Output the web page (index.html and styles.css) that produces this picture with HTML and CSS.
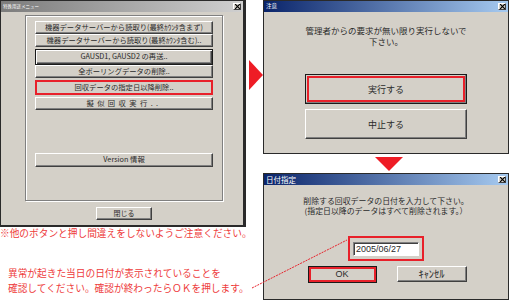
FILE: index.html
```html
<!DOCTYPE html>
<html lang="ja">
<head>
  <meta charset="UTF-8">
  <title>回収データの指定日以降削除</title>
  <link rel="stylesheet" href="styles.css">
</head>
<body>
  <div class="sheet">
    <div class="col-left">
      <div class="win win-menu">
        <div class="titlebar inactive">
          <span class="title title-menu">特殊用途メニュー</span>
          <span class="close-box"><svg width="5" height="5" viewBox="0 0 5 5"><path d="M0 0L5 5M5 0L0 5" stroke="#000" stroke-width="1.2"/></svg></span>
        </div>
        <div class="menu-body">
          <div class="group">
            <button class="btn btn-menu">機器データサーバーから読取り(最終ｶｳﾝﾀ含まず)</button>
            <button class="btn btn-menu">機器データサーバーから読取り(最終ｶｳﾝﾀ含む)..</button>
            <button class="btn btn-menu btn-default">GAUSD1, GAUSD2 の再送..</button>
            <button class="btn btn-menu">全ポーリングデータの削除..</button>
            <div class="mark mark-menu"><button class="btn btn-menu btn-inner">回収データの指定日以降削除..</button></div>
            <button class="btn btn-menu btn-spaced">擬似回収実行..</button>
            <button class="btn btn-menu btn-version">Version 情報</button>
          </div>
          <div class="close-row"><button class="btn btn-close">閉じる</button></div>
        </div>
      </div>
      <p class="note note-top">※他のボタンと押し間違えをしないようご注意ください。</p>
      <p class="note note-bottom">異常が起きた当日の日付が表示されていることを<br>確認してください。確認が終わったらＯＫを押します。</p>
    </div>

    <div class="col-arrow"><span class="arrow-right"></span></div>

    <div class="col-right">
      <div class="win win-warn">
        <div class="titlebar">
          <span class="title title-warn">注意</span>
          <span class="close-box"><svg width="5" height="5" viewBox="0 0 5 5"><path d="M0 0L5 5M5 0L0 5" stroke="#000" stroke-width="1.2"/></svg></span>
        </div>
        <div class="warn-body">
          <p class="msg msg-warn">管理者からの要求が無い限り実行しないで<br>下さい。</p>
          <div class="btn-default big-wrap"><div class="mark mark-big"><button class="btn btn-big btn-flat">実行する</button></div></div>
          <button class="btn btn-big">中止する</button>
        </div>
      </div>

      <div class="arrow-row"><span class="arrow-down"></span></div>

      <div class="win win-date">
        <div class="titlebar">
          <span class="title title-date">日付指定</span>
          <span class="close-box"><svg width="5" height="5" viewBox="0 0 5 5"><path d="M0 0L5 5M5 0L0 5" stroke="#000" stroke-width="1.2"/></svg></span>
        </div>
        <div class="date-body">
          <p class="msg msg-date">削除する回収データの日付を入力して下さい。<br>(指定日以降のデータはすべて削除されます。）</p>
          <div class="mark mark-input"><span class="date-input">2005/06/27</span></div>
          <div class="date-buttons">
            <div class="btn-default ok-wrap"><div class="mark mark-ok"><button class="btn btn-ok btn-flat">OK</button></div></div>
            <button class="btn btn-cancel">ｷｬﾝｾﾙ</button>
          </div>
        </div>
      </div>
    </div>

    <svg class="leader" width="511" height="300" viewBox="0 0 511 300">
      <line x1="252" y1="288" x2="347" y2="240" stroke="#e8202a" stroke-width="1" stroke-dasharray="2 1"/>
    </svg>
  </div>
</body>
</html>
```

FILE: styles.css
```css
body {
  margin: 0;
  background: #fff;
  font-family: "Noto Sans CJK JP", "Noto Sans", sans-serif;
  color: #2a2a2a;
}
p {
  margin: 0;
}
button {
  font: inherit;
  color: inherit;
  padding: 0;
  cursor: default;
}
.sheet {
  position: relative;
  width: 511px;
  height: 300px;
  display: flex;
  overflow: hidden;
}

/* columns */
.col-left {
  width: 246px;
}
.col-arrow {
  width: 17px;
  padding-top: 60px;
  box-sizing: border-box;
}
.col-right {
  width: 246px;
}

/* windows */
.win {
  box-sizing: border-box;
  background: #d4d0c8;
  border: 1px solid #2a2a2a;
  display: flex;
  flex-direction: column;
}
.win-menu {
  height: 227px;
  border-right-width: 3px;
  border-bottom-width: 2px;
}
.win-warn {
  height: 154px;
}
.win-date {
  height: 127px;
}
.titlebar {
  height: 11px;
  flex-shrink: 0;
  display: flex;
  align-items: center;
  justify-content: space-between;
  padding: 0 2px 0 2px;
  background: linear-gradient(to right, #0a246a, #a6caf0);
  color: #fff;
}
.titlebar.inactive {
  background: linear-gradient(to right, #7c7c7c, #d0d0d0);
}
.title {
  line-height: 1;
  white-space: nowrap;
}
.title-menu {
  font-size: 4.5px;
}
.title-warn {
  font-size: 5.5px;
}
.title-date {
  font-size: 7.5px;
}
.close-box {
  width: 8px;
  height: 7px;
  box-sizing: border-box;
  background: #d4d0c8;
  border: 1px solid;
  border-color: #fff #404040 #404040 #fff;
  display: flex;
  align-items: center;
  justify-content: center;
}
.close-box svg {
  display: block;
}

/* buttons */
.btn {
  box-sizing: border-box;
  background: #d4d0c8;
  border: 1px solid;
  border-color: #fff #404040 #404040 #fff;
  box-shadow: inset -1px -1px #808080;
  text-align: center;
  line-height: 1;
  white-space: nowrap;
}
.btn-default {
  border: 1px solid #1a1a1a;
  box-sizing: border-box;
}
.btn.btn-default {
  box-shadow: inset 1px 1px #fff, inset -1px -1px #404040, inset -2px -2px #808080;
}
.btn-flat {
  border: none;
  box-shadow: none;
}
.mark {
  box-sizing: border-box;
  border: 2px solid #e8202a;
}

/* menu window */
.menu-body {
  flex: 1;
  display: flex;
  flex-direction: column;
  padding: 3px 0 0 24px;
}
.group {
  width: 198px;
  height: 186px;
  flex-shrink: 0;
  box-sizing: border-box;
  border: 1px solid #808080;
  box-shadow: inset 1px 1px #fff, 1px 1px #fff;
  padding: 5px 0 0 9px;
  display: flex;
  flex-direction: column;
  align-items: flex-start;
}
.btn-menu {
  width: 178px;
  height: 13px;
  font-size: 7.3px;
}
.btn-menu.btn-default {
  height: 16px;
  margin-top: 2px;
}
.mark-menu {
  width: 178px;
  height: 15px;
  margin-top: 2px;
  display: flex;
}
.btn-inner {
  width: 100%;
  height: 100%;
  border: none;
  box-shadow: none;
}
.btn-spaced {
  margin-top: 2px;
  letter-spacing: 3.4px;
}
.btn-version {
  margin-top: 43px;
  height: 14px;
}
.close-row {
  display: flex;
  padding: 6px 0 0 71px;
}
.btn-close {
  width: 56px;
  height: 13px;
  font-size: 7px;
}

/* arrows */
.arrow-right {
  display: block;
  width: 0;
  height: 0;
  margin-left: 3px;
  border-left: 14px solid #ee1c25;
  border-top: 15px solid transparent;
  border-bottom: 15px solid transparent;
}
.arrow-row {
  height: 19px;
  display: flex;
  justify-content: center;
  padding: 3px 0 0 6px;
  box-sizing: border-box;
}
.arrow-down {
  display: block;
  width: 0;
  height: 0;
  border-top: 14px solid #ee1c25;
  border-left: 14px solid transparent;
  border-right: 14px solid transparent;
}

/* warning dialog */
.warn-body {
  display: flex;
  flex-direction: column;
  align-items: center;
  padding-top: 13px;
}
.msg {
  text-align: center;
  white-space: nowrap;
}
.msg-warn {
  font-size: 8.5px;
  line-height: 10.5px;
}
.big-wrap {
  width: 162px;
  height: 30px;
  margin-top: 28px;
  padding: 1px;
  background: #d4d0c8;
  box-shadow: inset -1px -1px #808080;
}
.mark-big {
  width: 100%;
  height: 100%;
  display: flex;
}
.btn-big {
  width: 162px;
  height: 30px;
  font-size: 9px;
  margin-top: 5px;
}
.mark-big .btn-big {
  width: 100%;
  height: 100%;
  margin: 0;
}

/* date dialog */
.date-body {
  display: flex;
  flex-direction: column;
  align-items: center;
  padding-top: 11px;
}
.msg-date {
  font-size: 7.9px;
  line-height: 9.5px;
}
.mark-input {
  width: 76px;
  height: 25px;
  margin-top: 21px;
  display: flex;
  align-items: center;
  justify-content: center;
}
.date-input {
  box-sizing: border-box;
  width: 66px;
  height: 14px;
  background: #fff;
  border: 1px solid;
  border-color: #808080 #fff #fff #808080;
  box-shadow: inset 1px 1px #404040;
  font-family: "Liberation Sans", sans-serif;
  font-size: 9px;
  line-height: 12px;
  padding-left: 2px;
}
.date-buttons {
  display: flex;
  gap: 20px;
  margin-top: 5px;
  padding-left: 2px;
}
.ok-wrap {
  width: 69px;
  height: 17px;
}
.mark-ok {
  width: 100%;
  height: 100%;
  display: flex;
}
.btn-ok {
  width: 100%;
  height: 100%;
  font-family: "Liberation Sans", sans-serif;
  font-size: 9px;
}
.btn-cancel {
  width: 70px;
  height: 16px;
  font-size: 10.5px;
}

/* notes */
.note {
  color: #ee3b3b;
  font-size: 9.7px;
  white-space: nowrap;
}
.note-top {
  line-height: 12px;
}
.note-bottom {
  margin-top: 27px;
  padding-left: 8px;
  line-height: 15px;
}
.leader {
  position: absolute;
  left: 0;
  top: 0;
  pointer-events: none;
}
```
